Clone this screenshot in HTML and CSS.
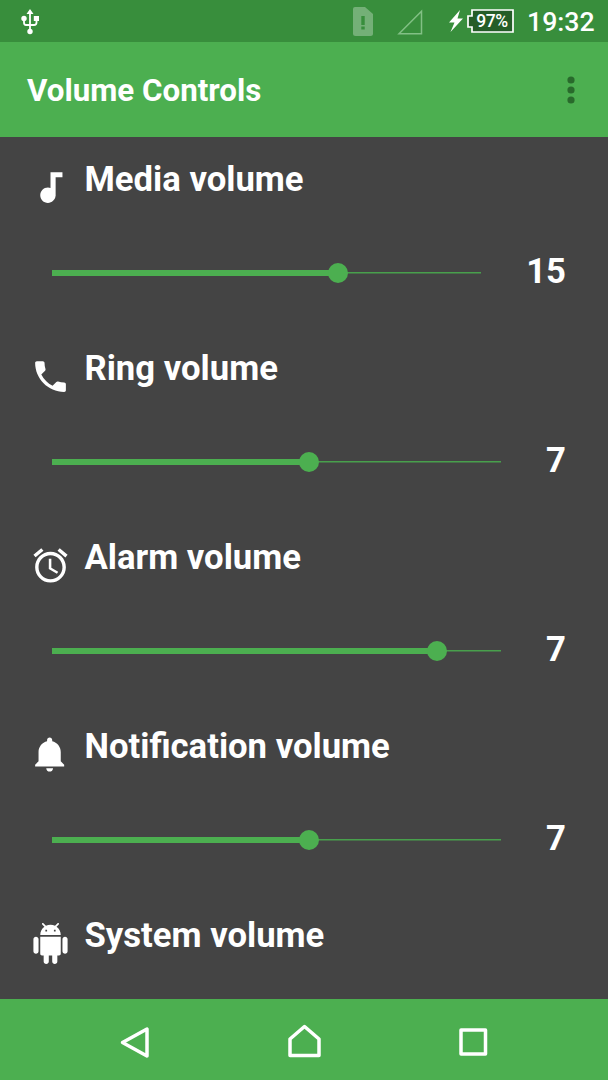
FILE: index.html
```html
<!DOCTYPE html>
<html lang="en">
<head>
<meta charset="utf-8">
<title>Volume Controls</title>
<link rel="stylesheet" href="styles.css">
</head>
<body>
<div class="screen">
  <header class="status">
    <svg class="usb" width="18" height="26" viewBox="0 0 18 26" fill="none" stroke="#fff" stroke-width="1.800">
      <path d="M9 3v20M3 9v4.500q0 2.500 2 2.500h8q2.500 0 2.500-2.500V9"/>
      <path d="M9 0l3.500 5h-7zM12.800 7H18v5h-5.200z" fill="#fff" stroke="none"/>
      <circle cx="3" cy="9.500" r="2.700" fill="#fff" stroke="none"/>
      <circle cx="9" cy="22.500" r="2.700" fill="#fff" stroke="none"/>
    </svg>
    <svg class="sim" width="20" height="29" viewBox="0 0 20 29">
      <path d="M2 0h10l8 7v19.500q0 2.500-2.500 2.500h-15Q0 29 0 26.500V2Q0 0 2 0z" fill="#74b077"/>
      <path d="M8.300 9h3.400v9H8.300zM8.300 19.500h3.400v3H8.300z" fill="#388e3c"/>
    </svg>
    <svg class="signal" width="26" height="26" viewBox="0 0 26 26" fill="none" stroke="#82c085" stroke-width="1.500">
      <path d="M2 24.700L24.500 2.200v22.500z"/>
    </svg>
    <svg class="bolt" width="14" height="22" viewBox="0 0 14 22" fill="#fff"><path d="M11 0L0 12.500h5.500L1.500 22 14 8.500H8.500z"/></svg>
    <div class="battery">
      <svg class="battery-shape" width="47" height="24" viewBox="0 0 47 24"><path d="M5 1h41v22H5v-5H1V7h4z" fill="#255d28" stroke="#fff" stroke-width="1.700"/></svg>
      <span class="battery-text">97%</span>
    </div>
    <time class="clock">19:32</time>
  </header>
  <div class="appbar">
    <h1 class="title">Volume Controls</h1>
    <svg class="more" width="8" height="28" viewBox="0 0 8 28" fill="#296a2c"><circle cx="4" cy="4" r="3.600"/><circle cx="4" cy="14" r="3.600"/><circle cx="4" cy="24" r="3.600"/></svg>
  </div>
  <main class="list">
    <section class="item">
      <div class="heading">
        <svg class="icon" viewBox="0 0 24 24"><path d="M12 3v9.280c-.47-.17-.97-.28-1.500-.28C8.010 12 6 14.010 6 16.500S8.010 21 10.500 21c2.310 0 4.200-1.750 4.450-4H15V6h4V3h-7z"/></svg>
        <h2 class="label">Media volume</h2>
      </div>
      <div class="control">
        <div class="slider"><div class="fill" style="width:66.700%"></div></div>
        <span class="value">15</span>
      </div>
    </section>
    <section class="item">
      <div class="heading">
        <svg class="icon" viewBox="0 0 24 24"><path d="M6.620 10.790c1.440 2.830 3.760 5.140 6.590 6.590l2.200-2.200c.27-.27.67-.36 1.020-.24 1.120.37 2.330.57 3.570.57.550 0 1 .45 1 1V20c0 .55-.45 1-1 1-9.390 0-17-7.610-17-17 0-.55.45-1 1-1h3.500c.55 0 1 .45 1 1 0 1.250.2 2.450.57 3.570.11.35.03.74-.25 1.020l-2.200 2.200z"/></svg>
        <h2 class="label">Ring volume</h2>
      </div>
      <div class="control">
        <div class="slider"><div class="fill" style="width:57.140%"></div></div>
        <span class="value">7</span>
      </div>
    </section>
    <section class="item">
      <div class="heading">
        <svg class="icon" viewBox="0 0 24 24"><path d="M22 5.720l-4.600-3.860-1.290 1.530 4.600 3.860L22 5.720zM7.880 3.390L6.600 1.860 2 5.710l1.290 1.530 4.590-3.850zM12.500 8H11v6l4.750 2.850.75-1.230-4-2.370V8zM12 4c-4.970 0-9 4.030-9 9s4.020 9 9 9c4.970 0 9-4.030 9-9s-4.030-9-9-9zm0 16c-3.870 0-7-3.130-7-7s3.130-7 7-7 7 3.130 7 7-3.130 7-7 7z"/></svg>
        <h2 class="label">Alarm volume</h2>
      </div>
      <div class="control">
        <div class="slider"><div class="fill" style="width:85.710%"></div></div>
        <span class="value">7</span>
      </div>
    </section>
    <section class="item">
      <div class="heading">
        <svg class="icon" viewBox="0 0 24 24"><path d="M11.500 22c1.100 0 2-.9 2-2h-4c0 1.100.9 2 2 2zm6.500-6v-5.500c0-3.070-2.130-5.640-5-6.320V3.500c0-.83-.67-1.500-1.500-1.500S10 2.670 10 3.500v.68c-2.870.68-5 3.250-5 6.320V16l-2 2v1h17v-1l-2-2z"/></svg>
        <h2 class="label">Notification volume</h2>
      </div>
      <div class="control">
        <div class="slider"><div class="fill" style="width:57.140%"></div></div>
        <span class="value">7</span>
      </div>
    </section>
    <section class="item">
      <div class="heading">
        <svg class="icon" viewBox="0 0 24 24"><path d="M6 18c0 .55.45 1 1 1h1v3.500c0 .83.67 1.500 1.500 1.500s1.500-.67 1.500-1.500V19h2v3.500c0 .83.67 1.500 1.500 1.500s1.500-.67 1.500-1.500V19h1c.55 0 1-.45 1-1V8H6v10zM3.500 8C2.670 8 2 8.670 2 9.500v7c0 .83.67 1.500 1.500 1.500S5 17.330 5 16.500v-7C5 8.670 4.330 8 3.500 8zm17 0c-.83 0-1.500.67-1.500 1.500v7c0 .83.67 1.500 1.500 1.500s1.500-.67 1.500-1.500v-7c0-.83-.67-1.500-1.500-1.500zm-4.970-5.840l1.300-1.300c.2-.2.2-.51 0-.71-.2-.2-.51-.2-.71 0l-1.480 1.480C13.850 1.230 12.950 1 12 1c-.96 0-1.860.23-2.660.63L7.850.15c-.2-.2-.51-.2-.71 0-.2.2-.2.51 0 .71l1.310 1.310C6.970 3.260 6 5.010 6 7h12c0-1.990-.97-3.750-2.470-4.840zM10 5H9V4h1v1zm5 0h-1V4h1v1z"/></svg>
        <h2 class="label">System volume</h2>
      </div>
    </section>
  </main>
  <nav class="navbar">
    <svg class="back" width="32" height="36" viewBox="0 0 32 36"><path d="M3.500 18.500L28 5v27z"/></svg>
    <svg class="home" width="36" height="36" viewBox="0 0 36 36"><path d="M3 31.500V15L17.500 2.500 32 15v16.500z"/></svg>
    <svg class="recent" width="30" height="30" viewBox="0 0 30 30"><path d="M3 3h24.500v24H3z"/></svg>
  </nav>
</div>
</body>
</html>
```
FILE: styles.css
```css
* { box-sizing: border-box; }
body { margin: 0; font-family: Roboto, sans-serif; color: #fff; }
svg { display: block; flex: none; }
.screen { width: 608px; height: 1080px; display: flex; flex-direction: column; overflow: hidden; background: #444; }
.status { height: 42px; flex: none; display: flex; align-items: flex-start; background: #388e3c; }
.usb { margin: 9px 0 0 21px; }
.sim { margin: 7px 0 0 auto; }
.signal { margin: 9px 0 0 24px; }
.bolt { margin: 10px 0 0 26px; }
.battery { position: relative; width: 47px; height: 24px; margin: 9px 0 0 4px; }
.battery-text { position: absolute; inset: 0 0 0 3px; text-align: center; font-weight: 500; font-size: 17.5px; line-height: 24px; letter-spacing: -0.5px; }
.clock { width: 68px; margin: 6px 13px 0 13px; font-weight: 500; font-size: 26.7px; line-height: 32px; white-space: nowrap; }
.appbar { height: 95px; flex: none; display: flex; justify-content: space-between; align-items: center; padding: 0 33px 0 27px; background: #4caf50; }
.title { margin: 3px 0 0; font-size: 31.3px; font-weight: 700; line-height: 40px; white-space: nowrap; }
.list { flex: 1; min-height: 0; overflow: hidden; }
.item { height: 189px; display: flex; flex-direction: column; }
.heading { height: 84px; flex: none; display: flex; align-items: flex-start; padding-left: 30px; }
.icon { width: 41px; height: 41px; margin-top: 30px; fill: #fff; }
.label { margin: 22px 0 0 13.5px; font-size: 34.67px; line-height: 40px; font-weight: 700; white-space: nowrap; }
.control { height: 105px; display: flex; align-items: flex-start; padding: 31px 42px 0 52px; }
.slider { flex: 1; height: 42px; display: flex; align-items: center; background: linear-gradient(#48a04c, #48a04c) center / 100% 1.500px no-repeat; }
.fill { height: 6px; display: flex; align-items: center; justify-content: flex-end; background: #4caf50; }
.fill::after { content: ""; flex: none; width: 20px; height: 20px; margin-right: -10px; border-radius: 50%; background: #4caf50; }
.value { margin: -1px 0 0 45px; font-size: 34.67px; line-height: 40px; font-weight: 700; }
.navbar { height: 81px; flex: none; display: flex; justify-content: space-between; align-items: center; padding: 5px 120px 0 119px; background: #4caf50; }
.navbar path { fill: none; stroke: #fff; stroke-width: 3.500; stroke-linejoin: round; }
```
